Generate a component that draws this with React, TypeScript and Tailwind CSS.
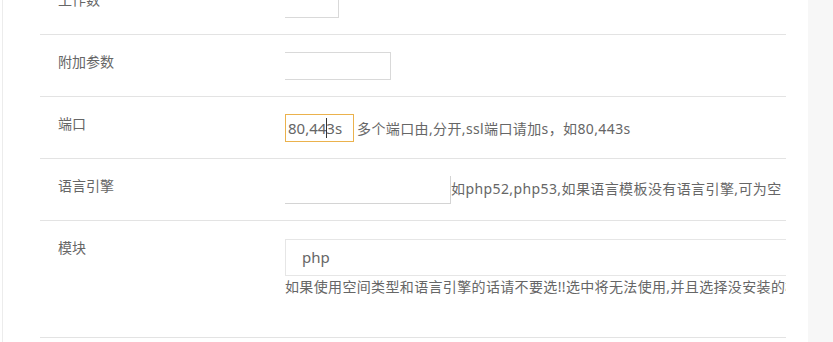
const font = "font-['Noto_Sans','Noto_Sans_CJK_SC',sans-serif]";

const Row = ({
  label,
  className = '',
  children,
}: {
  label: string;
  className?: string;
  children?: React.ReactNode;
}) => (
  <div className={`flex border-b border-[#e3e3e3] ${className}`}>
    <div className="w-[245px] shrink-0 pl-[18px] pt-[17px] text-[14px] leading-[20px] text-[#666]">
      {label}
    </div>
    <div className="min-w-0 flex-1 pt-[17px]">{children}</div>
  </div>
);

export default function App() {
  return (
    <div className={`flex h-[342px] w-[833px] overflow-hidden bg-[#f7f7f7] ${font}`}>
      <div className="h-[342px] w-[808px] shrink-0 bg-white pl-[2px]">
        <div className="h-[342px] overflow-hidden border-l border-[#ececec] pl-[37px]">
          <div className="-mt-[27px] w-[746px] overflow-hidden">
            {/* 工作数 (partly scrolled out) */}
            <Row label="工作数" className="h-[62px]">
              <div className="h-[28px] w-[54px] border-r border-b border-[#d9d9d9]" />
            </Row>

            <Row label="附加参数" className="h-[62px]">
              <div className="h-[28px] w-[106px] border-t border-r border-b border-[#d9d9d9]" />
            </Row>

            <Row label="端口" className="h-[62px]">
              <div className="flex items-center whitespace-nowrap">
                <div className="flex h-[28px] w-[69px] items-center border border-[#ebb24d] pl-[2px] text-[15px] text-[#666]">
                  <span>80,44</span>
                  <span className="mx-[-0.5px] h-[20px] w-px bg-[#333]" />
                  <span>3s</span>
                </div>
                <span className="ml-[3px] text-[14px] tracking-[0.38px] text-[#666]">
                  多个端口由,分开,ssl端口请加s，如80,443s
                </span>
              </div>
            </Row>

            <Row label="语言引擎" className="h-[62px]">
              <div className="flex items-end whitespace-nowrap">
                <div className="h-[28px] w-[166px] shrink-0 border-r border-b border-[#d4d4d4]" />
                <span className="mb-[5px] text-[14px] leading-[20px] tracking-[0.4px] text-[#666]">
                  如php52,php53,如果语言模板没有语言引擎,可为空
                </span>
              </div>
            </Row>

            <Row label="模块" className="h-[117px]">
              <div className="pt-px">
                <div className="flex h-[37px] w-[520px] min-w-full items-center border-y border-l border-[#e6e6e6] pl-[16px] text-[15px] text-[#666]">
                  php
                </div>
                <div className="mt-px whitespace-nowrap text-[14px] leading-[20px] tracking-[0.35px] text-[#666]">
                  如果使用空间类型和语言引擎的话请不要选!!选中将无法使用,并且选择没安装的模块将导致无法启动
                </div>
              </div>
            </Row>
          </div>
        </div>
      </div>
    </div>
  );
}
